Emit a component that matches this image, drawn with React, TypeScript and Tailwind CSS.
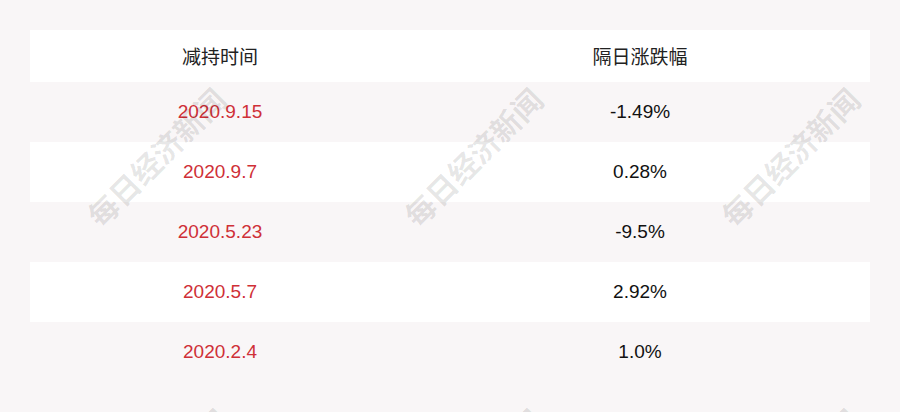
import React from 'react';

const rows = [
  { date: '2020.9.15', change: '-1.49%' },
  { date: '2020.9.7', change: '0.28%' },
  { date: '2020.5.23', change: '-9.5%' },
  { date: '2020.5.7', change: '2.92%' },
  { date: '2020.2.4', change: '1.0%' },
];

// watermark centers (px) over the whole page
const marks = [
  [156, 157],
  [473, 157],
  [790, 157],
  [159, 478],
  [473, 478],
  [790, 478],
];

export default function App() {
  return (
    <div
      className="relative h-[412px] w-[900px] overflow-hidden bg-[#f9f6f7] px-[30px] pt-[30px]"
      style={{ fontFamily: '"Liberation Sans", "Noto Sans CJK SC", sans-serif' }}
    >
      {/* Table */}
      <div className="w-[840px]">
        <div className="grid h-[52px] grid-cols-2 items-center bg-white text-[19px] text-[#222]">
          <div className="pr-[40px] text-center" style={{ fontFamily: '"Noto Sans CJK SC", sans-serif' }}>
            减持时间
          </div>
          <div className="pr-[40px] text-center" style={{ fontFamily: '"Noto Sans CJK SC", sans-serif' }}>
            隔日涨跌幅
          </div>
        </div>
        {rows.map((row, i) => (
          <div
            key={row.date}
            className={`grid h-[60px] grid-cols-2 items-center text-[19px] ${i % 2 === 1 ? 'bg-white' : ''}`}
          >
            <div className="pr-[40px] text-center text-[#cf3037]">{row.date}</div>
            <div className="pr-[40px] text-center text-[#111]">{row.change}</div>
          </div>
        ))}
      </div>

      {/* Watermark overlay */}
      <div className="pointer-events-none absolute inset-0">
        {marks.map(([x, y]) => (
          <span
            key={`${x}-${y}`}
            className="absolute whitespace-nowrap text-[30px] font-bold text-black/10"
            style={{
              left: x,
              top: y,
              transform: 'translate(-50%, -50%) rotate(-45deg)',
              fontFamily: '"Noto Sans CJK SC", serif',
            }}
          >
            每日经济新闻
          </span>
        ))}
      </div>
    </div>
  );
}
